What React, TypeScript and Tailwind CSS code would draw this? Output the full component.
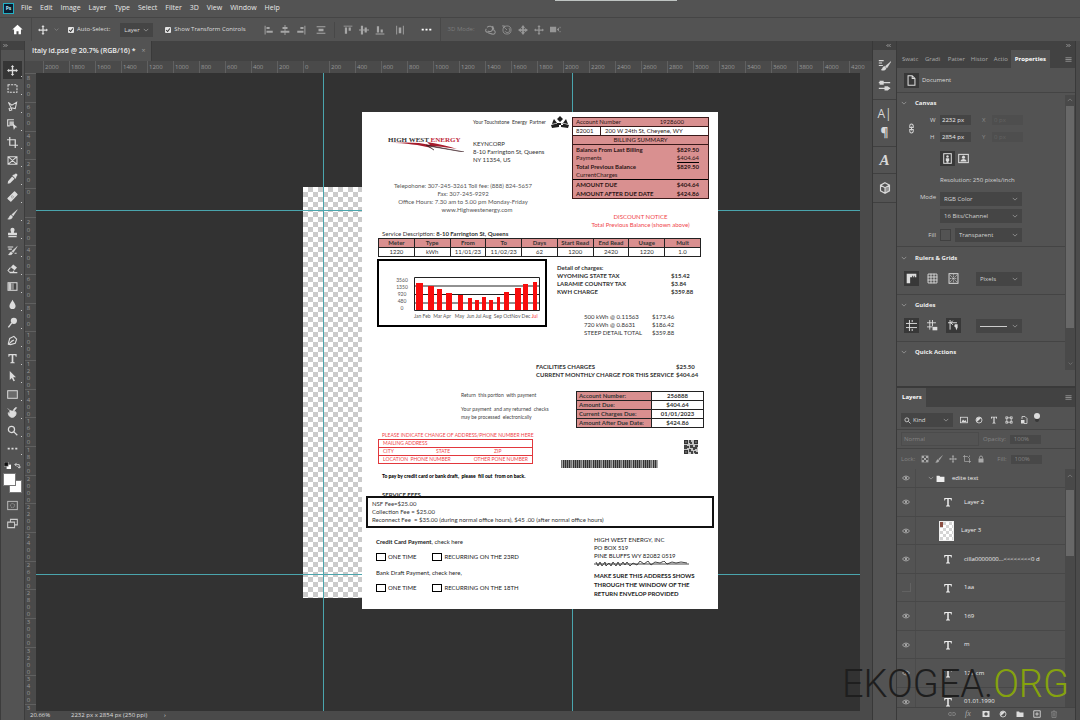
import type { ReactNode } from 'react';

const MENUS = ['File', 'Edit', 'Image', 'Layer', 'Type', 'Select', 'Filter', '3D', 'View', 'Window', 'Help'];

const ICONS: Record<string, ReactNode> = {
  home: <path d="M8 1 0.5 8H3v7h3.5v-4.500h3V15H13V8h2.500z" fill="currentColor" />,
  move: <path d="M8 0l2.500 3H9v4h4V5.500L16 8l-3 2.500V9H9v4h1.500L8 16l-2.500-3H7V9H3v1.500L0 8l3-2.500V7h4V3H5.500z" fill="currentColor" />,
  marquee: <rect x="1.500" y="2.500" width="13" height="11" fill="none" stroke="currentColor" strokeWidth="1.500" strokeDasharray="3 1.500" />,
  lasso: <path d="M2 2l5 4 7-4-2 9-6-1-4-8zM6 10l-3 1 1 3 3-1-1-3" fill="none" stroke="currentColor" strokeWidth="1.500" />,
  objectSelect: <><path d="M10 1H1v9h3" fill="none" stroke="currentColor" strokeWidth="1.600" /><path d="M3.500 3.500h6.500v6.500H3.500z" fill="currentColor" opacity=".8" /><path d="M8 6l7 6-3 .5L10 16z" fill="currentColor" /></>,
  crop: <path d="M4 0v12h12M0 4h12v12" fill="none" stroke="currentColor" strokeWidth="1.800" />,
  frame: <path d="M1.500 2.500h13v11h-13zM1.500 2.500l13 11M14.500 2.500l-13 11" fill="none" stroke="currentColor" strokeWidth="1.500" />,
  eyedropper: <path d="M10 3l1.500-1.500a2 2 0 0 1 3 3L13 6l.7.8-1.400 1.400-4.500-4.500L9.200 2.300zM7.500 5l3.500 3.500L4.500 15 1 15.500 1.500 12z" fill="currentColor" />,
  heal: <><path d="M11 1.500l3.500 3.500L5.500 14.500 1.500 11z" fill="currentColor" stroke="currentColor" strokeWidth="2" strokeLinejoin="round" /><path d="M7 7h1M9 8.500h1M7 10h1M6 8.500h1" stroke="#444" /></>,
  brush: <path d="M15 1l-8 7 2 2zM6 9c-3 0-2 4-5 5.500 3 1 7 .5 7-3.500z" fill="currentColor" stroke="currentColor" strokeWidth=".6" />,
  stamp: <path d="M8 1a3 3 0 0 1 3 3c0 2-1 2.500-1 4.500h4.500V12h-13V8.500H6C6 6.500 5 6 5 4a3 3 0 0 1 3-3zM2 13h12v2H2z" fill="currentColor" />,
  history: <><path d="M15 2l-8 7 2 2zM6 10c-2 0-2 3-4 4 3 1 6 0 6-2.500z" fill="currentColor" stroke="currentColor" strokeWidth=".6" /><path d="M1 3h8M2 6h5M11 12h3" stroke="currentColor" strokeWidth="1.500" /></>,
  eraser: <><path d="M9 2l5.500 4.500-3.500 4-5.500-4.500z" fill="currentColor" /><path d="M5 6.500L1.500 11 4 13.500h4.500L10.500 11M4 14h11" fill="none" stroke="currentColor" strokeWidth="1.500" /></>,
  gradient: <><rect x="1.500" y="2.500" width="13" height="11" fill="#444" stroke="currentColor" strokeWidth="1.500" /><path d="M2 3h4v10H2z" fill="#ccc" /><path d="M6 3h4v10H6z" fill="#888" /></>,
  drop: <path d="M8 1c1 3 4.500 6 4.500 9a4.500 4.500 0 0 1-9 0C3.500 7 7 4 8 1z" fill="currentColor" />,
  dodge: <><circle cx="10" cy="5.500" r="4.500" fill="currentColor" /><path d="M7 8.500L2 15" stroke="currentColor" strokeWidth="2" /></>,
  pen: <path d="M10 2l4 4-2 6-7 2-3-.5 0-1.500L4 5zM3 13l5-5M10 7l-2 2" fill="none" stroke="currentColor" strokeWidth="1.600" />,
  type: <path d="M2 1.500h12v4h-1.200L12 3.200H9.200v10l2 .6V15H4.800v-1.200l2-.6v-10H4L3.200 5.500H2z" fill="currentColor" />,
  arrow: <path d="M4 0l9 9H9l2.500 5-2 1-2.500-5-3 3z" fill="currentColor" />,
  rect: <rect x="1" y="2.500" width="14" height="11" fill="#6b6b6b" stroke="currentColor" strokeWidth="1.400" />,
  hand: <path d="M4 5c2 0 4 2 5 0s3-5 5-4l-4 5c3 0 4 2 3 5s-4 5-7 4-5-5-4-7l2 2zM1 2l3 3" fill="currentColor" stroke="currentColor" />,
  zoom: <path d="M11 6.500a4.500 4.500 0 1 1-9 0 4.500 4.500 0 0 1 9 0zM10 10l5 5" fill="none" stroke="currentColor" strokeWidth="1.800" />,
  dots: <path d="M1 7h3v2.500H1zM6.500 7h3v2.500h-3zM12 7h3v2.500h-3z" fill="currentColor" />,
  mask: <><rect x="1" y="2" width="14" height="12" fill="none" stroke="currentColor" strokeWidth="1.400" /><circle cx="8" cy="8" r="3" fill="none" stroke="currentColor" strokeDasharray="1.500 1" /></>,
  screens: <path d="M5 6V2h10v8h-4M1 6h10v8H1z" fill="none" stroke="currentColor" strokeWidth="1.500" />,
  alignLeft: <path d="M1 1h1.500v14H1zM4 3h5v3.500H4zM4 9h10v3.500H4z" fill="currentColor" />,
  alignCenter: <path d="M7.300 0h1.400v16H7.300zM4 3h8v3.500H4zM1 9h14v3.500H1z" fill="currentColor" />,
  alignRight: <path d="M13.500 1H15v14h-1.500zM7 3h5v3.500H7zM2 9h10v3.500H2z" fill="currentColor" />,
  distribute: <path d="M1 2h14v1.400H1zM4 6h8v4H4zM1 12.500h14V14H1z" fill="currentColor" />,
  alignTop: <path d="M1 1h14v1.500H1zM3 4h3.500v10H3zM9 4h3.500v5H9z" fill="currentColor" />,
  alignMiddle: <path d="M0 7.300h16v1.400H0zM3 1h3.500v14H3zM9 4h3.500v8H9z" fill="currentColor" />,
  alignBottom: <path d="M1 13.500h14V15H1zM3 2h3.500v10H3zM9 7h3.500v5H9z" fill="currentColor" />,
  spacing: <path d="M2 1h1.400v14H2zM6 4h4v9H6zM12.600 1H14v14h-1.400z" fill="currentColor" />,
  orbit: <path d="M3 5c3-3 8-2 8 2s-4 5-7 3M2 7c-3 4 1 6 5 4M10 8c4 0 6 4 4 6s-6 0-9-1M11 3l2 5" fill="none" stroke="currentColor" strokeWidth="1.500" />,
  roll: <><circle cx="8" cy="8" r="6.500" fill="none" stroke="currentColor" strokeWidth="1.300" /><path d="M1 1l4 1-2 3zM8 8l-3-3M11 5a4 4 0 1 1-6 5" fill="none" stroke="currentColor" strokeWidth="1.300" /></>,
  slide: <path d="M8 0l3 4-2 2 1 1 2-2 4 3-4 3-2-2-1 1 2 2-3 4-3-4 2-2-1-1-2 2-4-3 4-3 2 2 1-1-2-2z" fill="currentColor" />,
  camera: <path d="M0 4h9v8H0zM10 8l3-3v6zM14 4h1.200v2H14zM14 10h1.200v2H14z" fill="currentColor" />,
  brushes: <><path d="M1 2h6M1 5h4M1 8h5" stroke="currentColor" strokeWidth="1.300" /><path d="M16 3l-7 6 2 2zM8 9c-2 0-2 3-4 4.500 3 1 6 0 6-2.500z" fill="currentColor" stroke="currentColor" strokeWidth=".6" /></>,
  sliders: <><path d="M1 4.500h14M1 11.500h14" stroke="currentColor" strokeWidth="1.500" /><path d="M2 2h5v5H2zM8 9h4l3 2.500-3 2.500H8z" fill="currentColor" /></>,
  cube: <><path d="M8 8v7l6-3.200V4.500z" fill="currentColor" opacity=".5" /><path d="M8 1l6 3.200v7.600L8 15l-6-3.200V4.200zM2 4.200L8 7.500l6-3.300M8 7.500V15" fill="none" stroke="currentColor" strokeWidth="1.500" /></>,
  document: <path d="M3 1h6l4 4v10H3zM9 1v4h4" fill="none" stroke="currentColor" strokeWidth="1.500" />,
  chain: <path d="M5.500 6.500V4a2.500 2.500 0 0 1 5 0v2.500zM5.500 9.500V12a2.500 2.500 0 0 0 5 0V9.500zM8 5v6" fill="none" stroke="currentColor" strokeWidth="1.500" />,
  portrait: <><rect x="2.500" y="1" width="11" height="14" fill="none" stroke="currentColor" strokeWidth="1.500" /><circle cx="8" cy="5" r="1.800" fill="currentColor" /><path d="M5.500 7.500h5v4h-1V14h-3v-2.500h-1z" fill="currentColor" /></>,
  landscape: <><rect x="1" y="2" width="14" height="12" fill="none" stroke="currentColor" strokeWidth="1.500" /><circle cx="8" cy="6" r="2.200" fill="currentColor" /><path d="M3.500 12.500c0-5 9-5 9 0z" fill="currentColor" /></>,
  ruler: <path d="M1 1h14v5h-2V4h-1v2h-1.500V4H9v2H6v9H1z" fill="currentColor" />,
  grid: <path d="M1.500 1.500h13v13h-13zM5.800 1v14M10.200 1v14M1 5.800h14M1 10.200h14" fill="none" stroke="currentColor" strokeWidth="1.300" />,
  pixelGrid: <><rect x="1.500" y="1" width="13" height="14" fill="none" stroke="currentColor" strokeWidth="1.400" /><path d="M3 3l10 10M13 3L3 13M8 2v12M3 8h10" stroke="currentColor" strokeDasharray="1.500 1" /></>,
  guides: <path d="M5 0v16M0 5h16M0 11h16M9 0v3M9 13v3" stroke="currentColor" strokeWidth="1.400" />,
  guidesLock: <><path d="M4 0v14M8 0v9M0 4h13M0 10h8" stroke="currentColor" strokeWidth="1.300" /><path d="M8 10h7v5H8z" fill="currentColor" /></>,
  smartGuides: <><path d="M3 0v14M0 4h13M7 1L4 4l3 3" fill="none" stroke="currentColor" strokeWidth="1.400" /><path d="M10 6h4v5l-2 4-1-4-2-2z" fill="currentColor" /></>,
  image: <><rect x="1" y="2.500" width="14" height="11" fill="none" stroke="currentColor" strokeWidth="1.600" /><path d="M3 12l3-5 3 3 2-2 2 4z" fill="currentColor" /></>,
  adjust: <><circle cx="8" cy="8" r="6" fill="none" stroke="currentColor" strokeWidth="1.600" /><path d="M12.200 3.800a6 6 0 0 0-8.400 8.400z" fill="currentColor" /></>,
  shape: <path d="M3.500 3.500h9v9h-9zM1.500 1.500h4v4h-4zM10.500 1.500h4v4h-4zM1.500 10.500h4v4h-4zM10.500 10.500h4v4h-4z" fill="none" stroke="currentColor" strokeWidth="1.400" />,
  smart: <><path d="M4 6V1h6l4 4v10H8" fill="none" stroke="currentColor" strokeWidth="1.600" /><path d="M2 8h7v7H2z" fill="currentColor" /></>,
  lock: <><path d="M3 7h10v8H3z" fill="currentColor" /><path d="M5 7V5a3 3 0 0 1 6 0v2" fill="none" stroke="currentColor" strokeWidth="1.800" /></>,
  checker: <><path d="M1.500 1.500h13v13h-13z" fill="none" stroke="currentColor" /><path d="M2 2h4v4H2zM10 2h4v4h-4zM6 6h4v4H6zM2 10h4v4H2zM10 10h4v4h-4z" fill="currentColor" /></>,
  artboard: <path d="M3 0v13h13M0 3h9l4 4v9M13 1v3" fill="none" stroke="currentColor" strokeWidth="1.400" />,
  folder: <path d="M1 3h5l1.500 2H15v9H1z" fill="currentColor" />,
  eye: <><path d="M1 8c3-5 11-5 14 0-3 5-11 5-14 0z" fill="none" stroke="currentColor" strokeWidth="1.800" /><circle cx="8" cy="8" r="2.300" fill="currentColor" /></>,
  link: <path d="M7 5H4a3 3 0 0 0 0 6h3M9 5h3a3 3 0 0 1 0 6H9M5 8h6" fill="none" stroke="currentColor" strokeWidth="1.600" />,
  layerMask: <><path d="M1 2h14v12H1z" fill="currentColor" /><circle cx="8" cy="8" r="3.500" fill="#535353" /></>,
  add: <path d="M1.500 1.500h13v13h-13zM8 4.500v7M4.500 8h7" fill="none" stroke="currentColor" strokeWidth="1.700" />,
  trash: <path d="M2 4h12M6 4V2h4v2M3.500 4l.5 11h8l.5-11M6.500 6v7M9.500 6v7" fill="none" stroke="currentColor" strokeWidth="1.500" />,
  burger: <path d="M1 4h14M1 8h14M1 12h14" stroke="currentColor" strokeWidth="1.600" />,
  chevron: <path d="M2 5l6 6 6-6" fill="none" stroke="currentColor" strokeWidth="1.800" />,
  chevronUp: <path d="M2 11l6-6 6 6" fill="none" stroke="currentColor" strokeWidth="1.800" />,
  expand: <path d="M2 4l4 4-4 4M9 4l4 4-4 4" fill="none" stroke="currentColor" strokeWidth="2.400" />,
  collapse: <path d="M7 4L3 8l4 4M14 4l-4 4 4 4" fill="none" stroke="currentColor" strokeWidth="2.400" />,
};

function Icon({ name, className = 'size-3' }: { name: string; className?: string }) {
  return (
    <svg viewBox="0 0 16 16" className={`shrink-0 ${className}`} aria-hidden="true">
      {ICONS[name]}
    </svg>
  );
}

function Dropdown({ label, value, className = '' }: { label: string; value: string; className?: string }) {
  return (
    <div className={`relative h-[14px] bg-[#454545] ${className}`}>
      <select aria-label={label} className="h-full w-full appearance-none bg-transparent pr-3 pl-1 text-[6px] leading-[14px] outline-none">
        <option>{value}</option>
      </select>
      <Icon name="chevron" className="pointer-events-none absolute top-1 right-1 size-[6px] text-[#aaa]" />
    </div>
  );
}

function Check({ label }: { label: string }) {
  return (
    <label className="flex items-center gap-[3px] font-medium whitespace-nowrap">
      <span className="relative flex size-[6px]">
        <input type="checkbox" defaultChecked className="size-[6px] appearance-none rounded-[1px] bg-[#e4e4e4]" />
        <svg viewBox="0 0 8 8" className="pointer-events-none absolute inset-0 size-[6px]"><path d="M1.500 4l2 2 3-4" fill="none" stroke="#333" strokeWidth="1.400" /></svg>
      </span>
      {label}
    </label>
  );
}

function MenuBar() {
  return (
    <header className="relative flex h-[17px] shrink-0 items-center gap-[7px] pl-[3px] text-[7px] text-[#e8e8e8]">
      <span className="grid size-[11px] place-items-center border border-[#23b0c4] bg-[#0a1f33] text-[5px] font-bold text-[#b5e8f5]">Ps</span>
      <nav className="flex gap-2">
        {MENUS.map((m) => (
          <button key={m}>{m}</button>
        ))}
      </nav>
      <div className="absolute top-0 left-[555px] h-px w-[122px] bg-[#bfc4c2]" />
    </header>
  );
}

function OptionsBar() {
  return (
    <div className="flex h-6 shrink-0 items-center border-t border-[#454545] text-[6px] text-[#dedede]">
      <button aria-label="Home" className="ml-3 text-white"><Icon name="home" className="size-[11px]" /></button>
      <div className="ml-2 h-6 w-px bg-[#484848]" />
      <Icon name="move" className="ml-[6px] size-[10px]" />
      <Icon name="chevron" className="ml-[6px] size-[5px] text-[#999]" />
      <div className="ml-[9px]"><Check label="Auto-Select:" /></div>
      <Dropdown label="Auto-select target" value="Layer" className="ml-[10px] w-[33px]" />
      <div className="ml-3"><Check label="Show Transform Controls" /></div>
      <div className="ml-[18px] flex items-center gap-[6px] text-[#a6a6a6]">
        <Icon name="alignLeft" className="size-[10px]" />
        <Icon name="alignCenter" className="size-[10px]" />
        <Icon name="alignRight" className="size-[10px]" />
        <Icon name="distribute" className="ml-1 size-[10px]" />
        <div className="mx-[2px] h-4 w-px bg-[#484848]" />
        <Icon name="alignTop" className="size-[10px]" />
        <Icon name="alignMiddle" className="size-[10px]" />
        <Icon name="alignBottom" className="size-[10px]" />
        <Icon name="spacing" className="ml-1 size-[10px]" />
      </div>
      <Icon name="dots" className="ml-4 size-[11px] text-white" />
      <div className="ml-2 h-6 w-px bg-[#484848]" />
      <span className="ml-[7px] text-[#7c7c7c]">3D Mode:</span>
      <div className="ml-[10px] flex items-center gap-[6px] text-[#969696]">
        <Icon name="orbit" className="size-[11px]" />
        <Icon name="roll" className="size-[10px]" />
        <Icon name="slide" className="size-[10px]" />
        <Icon name="move" className="size-[10px]" />
        <Icon name="camera" className="size-[11px]" />
      </div>
    </div>
  );
}

const TOOLS = ['move', 'marquee', 'lasso', 'objectSelect', 'crop', 'frame', 'eyedropper', 'heal', 'brush', 'stamp', 'history', 'eraser', 'gradient', 'drop', 'dodge', 'pen', 'type', 'arrow', 'rect', 'hand', 'zoom', 'dots'];

function Toolbar() {
  return (
    <aside className="flex w-[25px] shrink-0 flex-col border-x border-[#3c3c3c]">
      <div className="flex h-[9px] items-center bg-[#424242] pl-[2px] text-[#ccc]"><Icon name="expand" className="size-[5px]" /></div>
      <div className="mt-[11px] flex flex-col items-center">
        {TOOLS.map((t, i) => (
          <button key={t} aria-label={t} className={`relative grid h-[18px] w-[19px] place-items-center text-[#dcdcdc] ${i === 0 ? 'bg-[#353535]' : ''}`}>
            <Icon name={t} className="size-[11px]" />
            <span className="absolute right-0 bottom-[2px] size-px bg-[#ccc]" />
          </button>
        ))}
        <div className="flex w-full justify-between px-[3px] pt-[5px] text-[#ddd]">
          <svg viewBox="0 0 8 8" className="size-[7px]"><path d="M3 3h5v5H3z" fill="#fff" /><path d="M0 0h5v5H0z" fill="#111" stroke="#ccc" strokeWidth=".6" /></svg>
          <svg viewBox="0 0 8 8" className="size-[7px]"><path d="M1 3h5v4M3 1L1 3l2 2M4 5l2 2 2-2" fill="none" stroke="currentColor" /></svg>
        </div>
        <div className="mt-1 flex">
          <button aria-label="Foreground color" className="relative z-10 size-[13px] border border-[#777] bg-white" />
          <button aria-label="Background color" className="mt-[7px] -ml-[7px] size-[13px] border border-[#777] bg-white" />
        </div>
        <button aria-label="Quick mask" className="mt-[7px] text-[#bbb]"><Icon name="mask" className="size-[11px]" /></button>
        <button aria-label="Screen mode" className="mt-[7px] text-[#ccc]"><Icon name="screens" className="size-[11px]" /></button>
      </div>
    </aside>
  );
}

const H_MARKS = Array.from({ length: 32 }, (_, i) => Math.abs(i * 200 - 2000));
// the last mark only has room for its first digit
const V_MARKS = [...Array.from({ length: 22 }, (_, i) => String(Math.abs(i * 200 - 800))), '3'];

function HighWestLogo() {
  return (
    <div className="w-[78px] font-['Liberation_Serif',serif] text-[7px] leading-[8px] font-bold whitespace-nowrap text-[#333]">
      HIGH WEST <span className="text-[#c0283a]">ENERGY</span>
      <svg viewBox="0 0 78 10" className="-mt-[2px] block h-[10px] w-full">
        <path d="M2 1c14-1 30-1 40 2l-3-3c12 2 22 4 30 7-12-2-20-3-29-3l4 2C31 3 18 1 2 1z" fill="#a51c2c" />
        <path d="M38 3l38 7-36-6 6 4z" fill="#3a1d22" stroke="#3a1d22" strokeWidth=".5" />
      </svg>
    </div>
  );
}

const BARS = [
  [2, 7, 27], [14, 6, 24], [23, 5, 21], [32, 6, 17], [44, 5, 15], [54, 4, 12], [61, 4, 10], [68, 4, 13],
  [75, 4, 10], [83, 3, 13], [90, 5, 18], [101, 6, 22], [109, 5, 26], [119, 4, 28],
];

function UsageChart() {
  return (
    <figure className="mt-[2px] ml-[15px] flex w-[170px] gap-[6px] self-start border-2 border-black pt-4 pb-[5px] pl-[17px] text-[5px] leading-[7px] text-[#555]">
      <div className="w-3 text-center">
        {['3560', '1350', '920', '480', '0'].map((v) => (
          <div key={v}>{v}</div>
        ))}
      </div>
      <div className="whitespace-nowrap">
        <svg viewBox="0 0 126 34" className="h-[34px] w-[126px]">
          <path d="M.5.500h125v33H.5zM0 9h126M0 17.500h126M0 26h126" fill="none" stroke="#222" />
          {BARS.map(([x, w, h]) => (
            <rect key={x} x={x} y={33 - h} width={w} height={h} fill="#f80c0c" />
          ))}
        </svg>
        <figcaption className="mt-[2px]">Jan Feb&nbsp; Mar Apr &nbsp; May&nbsp; Jun Jul Aug&nbsp; Sep OctNov Dec <span className="text-red-500">Jul</span></figcaption>
      </div>
    </figure>
  );
}

const METER = [['Meter', '1220'], ['Type', 'kWh'], ['From', '11/01/23'], ['To', '11/02/23'], ['Days', '62'], ['Start Read', '1200'], ['End Read', '2420'], ['Usage', '1220'], ['Mult', '1.0']];
const DUE = [['Account Number:', '256888'], ['Amount Due:', '$404.64'], ['Current Charges  Due:', '01/01/2023'], ['Amount After Due Date:', '$424.86']];

function Line({ left, right, className = '' }: { left: string; right: string; className?: string }) {
  return (
    <div className={`flex justify-between ${className}`}>
      <span>{left}</span>
      <span>{right}</span>
    </div>
  );
}

function Summary() {
  return (
    <div className="mt-[5px] w-[137px] border border-[#3a1a1a] bg-[#d99090] leading-[9px] text-[#2c1515]">
      <Line left="Account Number" right="1928600" className="pr-6 pl-[3px] leading-[8px]" />
      <div className="flex border-y border-[#3a1a1a] bg-white leading-[8px]">
        <span className="w-7 border-r border-[#3a1a1a] pl-[3px]">82001</span>
        <span className="pl-1">200 W 24th St, Cheyene, WY</span>
      </div>
      <div className="border-b border-[#3a1a1a] text-center leading-[8px]">BILLING SUMMARY</div>
      <div className="pt-px pr-[9px] pl-[3px] leading-[8px]">
        <Line left="Balance From Last Billing" right="$829.50" className="font-bold" />
        <div className="flex justify-between">Payments<span className="border-b border-black">$404.64</span></div>
        <Line left="Total Previous Balance" right="$829.50" className="font-bold" />
        <div>CurrentCharges</div>
      </div>
      <div className="border-t border-black pr-[9px] pl-[3px] font-bold">
        <Line left="AMOUNT DUE" right="$404.64" />
        <Line left="AMOUNT AFTER DUE DATE" right="$424.86" />
      </div>
    </div>
  );
}

function PayBox({ label }: { label: string }) {
  return (
    <label className="flex items-center gap-[2px]">
      <input type="checkbox" className="h-[8px] w-[10px] appearance-none border border-black bg-white" />
      {label}
    </label>
  );
}

function Qr() {
  return (
    <svg viewBox="0 0 14 14" className="size-[14px]">
      <path d="M0 0h14v14H0z" fill="#c4c4c4" />
      <path d="M0 0h4v4H0zM10 0h4v4h-4zM0 10h4v4H0z" fill="#333" />
      <path d="M1.500 1.500h1v1h-1zM11.500 1.500h1v1h-1zM1.500 11.500h1v1h-1z" fill="#eee" />
      <path d="M5 0h2v2h1v2H6V3H5zM0 5h3v1h2v2H3v1H0zM6 5h3v2h2V5h3v2h-1v2h-2v1H9V8H6zM5 9h2v2h2v3H7v-2H5zM10 11h2v1h2v2h-3v-1h-1z" fill="#444" />
    </svg>
  );
}

const BARCODE = Array.from({ length: 48 }, (_, i) => ((i * 7) % 5 === 0 ? 0.5 : 1.3));

function Bill() {
  return (
    <article className="absolute top-[39px] left-[326px] w-[356px] bg-white pb-[11px] font-[Lato,sans-serif] text-[6px] leading-[8px] whitespace-nowrap text-[#333]">
      <div className="flex">
        <div className="w-[210px]">
          <div className="flex h-[20px] items-center gap-[5px] pl-[111px] text-[5px]">
            Your Touchstone&nbsp; Energy&nbsp; Partner
            <svg viewBox="0 0 18 12" className="h-3 w-[18px] shrink-0">
              <path d="M9 0l3 3-3 3-3-3zM3 3l3 4-5 1 1-3zM15 3l2 5-5-1zM0 9l8-2v4L1 12zM18 9l-8-2v4l7 1zM6 7h6v2H6z" fill="#1f1f1f" />
            </svg>
          </div>
          <div className="flex gap-[7px] pt-[4px] pl-[26px]">
            <HighWestLogo />
            <div className="pt-1">KEYNCORP<br />8-10 Farrington St, Queens<br />NY 11354, US</div>
          </div>
          <div className="mt-[18px] w-[202px] text-center text-[#555]">
            Telepohone: 307-245-3261 Toll fee: (888) 824-5657<br />
            Fax: 307-245-9292<br />
            Office Hours: 7.30 am to 5.00 pm Monday-Friday<br />
            <span className="pl-7">www.Highwestenergy.com</span>
          </div>
        </div>
        <div>
          <Summary />
          <div className="mt-[14px] w-[137px] text-center text-[#f0454a]">
            DISCOUNT NOTICE<br />Total Previous Balance (shown above)
          </div>
        </div>
      </div>

      <div className="pt-px pl-5">Service Description: <b>8-10 Farrington St, Queens</b></div>
      <table className="ml-4 w-[323px] table-fixed border-collapse text-center leading-[8px] [&_td]:border [&_td]:border-[#222] [&_th]:border [&_th]:border-[#222]">
        <thead className="bg-[#d98f8f]"><tr>{METER.map(([h]) => <th key={h} className="p-0">{h}</th>)}</tr></thead>
        <tbody><tr>{METER.map(([h, v]) => <td key={h} className="p-0">{v}</td>)}</tr></tbody>
      </table>

      <div className="flex">
        <UsageChart />
        <div className="pt-[7px] pl-[10px]">
          <div className="w-[141px] font-bold">
            Detail of charges:
            <div className="grid grid-cols-[114px_1fr]">
              <span>WYOMING STATE TAX</span><span>$15.42</span>
              <span>LARAMIE COUNTRY TAX</span><span>$3.84</span>
              <span>KWH CHARGE</span><span>$359.88</span>
            </div>
          </div>
          <div className="mt-[17px] ml-[27px] grid grid-cols-[68px_1fr]">
            <span>500 kWh @ 0.11563</span><span>$173.46</span>
            <span>720 kWh @ 0.8631</span><span>$186.42</span>
            <span>STEEP DETAIL TOTAL</span><span>$359.88</span>
          </div>
        </div>
      </div>
      <div className="mt-[26px] ml-[174px] grid grid-cols-[140px_1fr] font-bold">
        <span>FACILITIES CHARGES</span><span>$25.50</span>
        <span>CURRENT MONTHLY CHARGE FOR THIS SERVICE</span><span>$404.64</span>
      </div>

      <div className="mt-[12px] flex">
        <div className="w-[214px]">
          <div className="pl-[99px] text-[5px] text-[#444]">
            Return&nbsp; this portion&nbsp; with payment
            <div className="mt-[6px]">Your payment&nbsp; and any returned&nbsp; checks<br />may be processed&nbsp; electronically</div>
          </div>
          <div className="mt-[10px] pl-5 text-[5px] text-[#f0454a]">PLEASE INDICATE CHANGE OF ADDRESS/PHONE NUMBER HERE</div>
          <div className="ml-4 w-[155px] divide-y divide-[#e2373c] border border-[#e2373c] text-[5px] leading-[7px] text-[#f0454a] *:flex *:px-1">
            <div>MAILING ADDRESS</div>
            <div><span className="w-[53px]">CITY</span><span className="w-[58px]">STATE</span><span>ZIP</span></div>
            <div className="justify-between"><span>LOCATION&nbsp; PHONE NUMBER</span><span>OTHER PONE NUMBER</span></div>
          </div>
          <div className="mt-2 pl-5 text-[5px] font-black text-black">To pay by credit card or bank draft,&nbsp; please&nbsp; fill out&nbsp; from on back.</div>
        </div>
        <div>
          <table className="w-[128px] border-collapse leading-[8px] font-bold [&_td]:border [&_td]:border-[#222] [&_th]:border [&_th]:border-[#222]">
            <tbody>
              {DUE.map(([k, v]) => (
                <tr key={k}>
                  <th className="w-[75px] bg-[#d98f8f] p-0 pl-[2px] text-left">{k}</th>
                  <td className="p-0 text-center">{v}</td>
                </tr>
              ))}
            </tbody>
          </table>
          <div className="mt-3 flex justify-end pr-[6px]"><Qr /></div>
          <svg viewBox="0 0 97 8" className="mt-[6px] -ml-[15px] h-2 w-[97px]">
            <path d="M0 0h97v8H0z" fill="#aaa" />
            {BARCODE.map((w, i) => <rect key={i} x={i * 2} y="0" width={w} height="8" fill="#333" />)}
          </svg>
        </div>
      </div>

      <h3 className="mt-[11px] pl-5 font-bold">SERVICE FEES</h3>
      <div className="relative mx-1 -mt-[3px] border-2 border-[#111] bg-white py-[2px] pl-1">
        NSF Fee=$25.00<br />Collection Fee = $25.00<br />Reconnect Fee&nbsp; = $35.00 (during normal office hours), $45 .00 (after normal office hours)
      </div>

      <div className="mt-[8px] flex text-[#222]">
        <div className="w-[218px] pl-[14px]">
          <div className="mt-[2px]"><b>Credit Card Payment</b>, check here</div>
          <div className="mt-[7px] flex gap-4"><PayBox label="ONE TIME" /><PayBox label="RECURRING ON THE 23RD" /></div>
          <div className="mt-[8px]">Bank Draft Payment, check here,</div>
          <div className="mt-[7px] flex gap-4"><PayBox label="ONE TIME" /><PayBox label="RECURRING ON THE 18TH" /></div>
        </div>
        <address className="pl-[14px] not-italic">
          HIGH WEST ENERGY, INC<br />PO BOX 519<br />PINE BLUFFS WY 82082 0519
          <svg viewBox="0 0 95 6" className="mt-px h-[6px] w-[95px]">
            <path d="M0 3h95M2 1l2 4 2-4 2 4 3-4 1 4 3-3 2 3 2-4 3 4 2-4 2 4 3-4 2 3 2-3 3 4 3-3 4 2 3-4 4 3 4-3 3 4 4-3 5 1 4-2 3 3 5-2 4 1 5-1 6 1" fill="none" stroke="#333" strokeWidth=".9" />
          </svg>
          <div className="mt-[4px] leading-[9px] font-bold">MAKE SURE THIS ADDRESS SHOWS<br />THROUGH THE WINDOW OF THE<br />RETURN ENVELOP PROVIDED</div>
        </address>
      </div>
    </article>
  );
}

function Workspace() {
  return (
    <main className="flex min-w-0 flex-1 flex-col bg-[#424242]">
      <div className="flex h-5 shrink-0">
        <div className="flex items-center gap-[6px] border-r border-[#3a3a3a] bg-[#535353] pr-[5px] pl-[7px] text-[7px] font-semibold text-[#eee]">
          Italy id.psd @ 20.7% (RGB/16) *
          <button aria-label="Close document" className="text-[7px] font-normal text-[#999]">×</button>
        </div>
      </div>
      <div className="flex h-3 shrink-0 overflow-hidden bg-[#4a4a4a] pl-[18px] text-[6px] leading-[13px] text-[#999]">
        {H_MARKS.map((m, i) => (
          <div key={i} className="w-[26px] shrink-0 border-l border-[#606060] pl-px">{m}</div>
        ))}
      </div>
      <div className="flex min-h-0 flex-1">
        <div className="w-[11px] shrink-0 overflow-hidden bg-[#4a4a4a] text-center text-[6px] leading-[7px] text-[#999]">
          {V_MARKS.map((m, i) => (
            <div key={i} className={`h-[29px] border-t border-[#606060] pr-1 last:h-[7px] nth-[3n]:h-7 ${m.length === 3 ? 'leading-[8px]' : ''}`}>
              {m.split('').map((d, j) => <div key={j}>{d}</div>)}
            </div>
          ))}
        </div>
        <div className="relative flex-1 overflow-hidden bg-[#323232]">
          <div className="absolute top-[114px] left-[267px] h-[411px] w-[270px] bg-[repeating-conic-gradient(#cbcbcb_0_25%,#fff_0_50%)] bg-size-[10px_10px]" />
          <div className="absolute inset-y-0 left-[287px] w-px bg-[#4aa5ad]" />
          <div className="absolute inset-y-0 left-[536px] w-px bg-[#4aa5ad]" />
          <div className="absolute inset-x-0 top-[137px] h-px bg-[#4aa5ad]" />
          <div className="absolute inset-x-0 top-[501px] h-px bg-[#4aa5ad]" />
          <Bill />
        </div>
        <div className="w-3 shrink-0 bg-[#4a4a4a]" />
      </div>
      <footer className="flex h-[9px] shrink-0 items-start bg-[#4a4a4a] pl-[5px] text-[6px] leading-[9px] text-[#ddd]">
        <span className="w-[41px]">20.66%</span>
        <span className="w-[93px]">2232 px x 2854 px (250 ppi)</span>
        <span>›</span>
      </footer>
    </main>
  );
}

function IconDock() {
  return (
    <aside className="flex w-6 shrink-0 flex-col border-l border-[#383838] text-[#d8d8d8]">
      <div className="flex h-[9px] items-center justify-end bg-[#424242] pr-[5px] text-[#ccc]"><Icon name="collapse" className="size-[5px]" /></div>
      <div className="flex flex-col items-center gap-[7px] border-b border-[#404040] pt-[9px] pb-[7px]">
        <Icon name="brushes" className="size-[13px]" />
        <Icon name="sliders" className="size-[13px]" />
      </div>
      <div className="flex flex-col items-center gap-[3px] border-b border-[#404040] pt-[6px] pb-[5px] text-[12px] leading-4">
        <span>A|</span>
        <span className="font-bold">¶</span>
      </div>
      <div className="border-b border-[#404040] py-[5px] text-center font-['Liberation_Serif',serif] text-[15px] leading-4 font-bold italic">A</div>
      <div className="grid place-items-center border-b border-[#404040] py-2"><Icon name="cube" className="size-3" /></div>
    </aside>
  );
}

function SectionTitle({ children }: { children: ReactNode }) {
  return (
    <h2 className="flex items-center gap-2 pl-[4px] text-[6px] leading-[10px] font-bold text-[#eee]">
      <Icon name="chevron" className="size-[6px] text-[#aaa]" />
      {children}
    </h2>
  );
}

function SizeField({ id, value, disabled }: { id: string; value: string; disabled?: boolean }) {
  return (
    <label className={`flex items-center gap-[4px] ${disabled ? 'text-[#8a8a8a]' : ''}`}>
      <span className="w-[6px]">{id}</span>
      <input defaultValue={value} disabled={disabled} className={`h-[10px] w-[31px] pl-[2px] ${disabled ? 'bg-[#4e4e4e] text-[#636363]' : 'bg-[#454545] text-[#eee]'}`} />
    </label>
  );
}

function Toggle({ name, on }: { name: string; on?: boolean }) {
  return (
    <button aria-label={name} className={`grid size-[15px] place-items-center text-[#ddd] ${on ? 'bg-[#383838]' : ''}`}>
      <Icon name={name} className="size-[11px]" />
    </button>
  );
}

function Properties() {
  return (
    <section className="flex h-[336px] shrink-0 flex-col">
      <div className="flex h-[18px] items-center bg-[#424242] text-[6px] text-[#aaa]">
        <div className="flex flex-1 gap-[6px] overflow-hidden pl-[5px]">
          {['Swatc', 'Gradi', 'Patter', 'Histor', 'Actio'].map((t) => <button key={t} className="w-[17px] text-left">{t}</button>)}
        </div>
        <button className="h-full bg-[#535353] px-1 font-bold text-white">Properties</button>
        <button aria-label="Panel menu" className="mr-[3px] ml-[15px]"><Icon name="burger" className="size-[7px]" /></button>
      </div>
      <div className="flex h-[25px] items-center gap-[3px] border-b border-[#444] pl-[7px] text-[6px]">
        <Toggle name="document" on />
        Document
      </div>
      <div className="flex min-h-0 flex-1">
        <div className="min-w-0 flex-1 text-[6px] text-[#d4d4d4]">
          <div className="pt-[5px]"><SectionTitle>Canvas</SectionTitle></div>
          <div className="mt-[7px] flex items-center pl-[9px]">
            <Icon name="chain" className="mr-[13px] size-[11px]" />
            <div className="grid grid-cols-[52px_1fr] gap-y-[7px]">
              <SizeField id="W" value="2232 px" /><SizeField id="X" value="0 px" disabled />
              <SizeField id="H" value="2854 px" /><SizeField id="Y" value="0 px" disabled />
            </div>
          </div>
          <div className="mt-[9px] flex gap-px pl-[43px]"><Toggle name="portrait" on /><Toggle name="landscape" /></div>
          <div className="mt-[9px] pl-[43px] leading-[10px]">Resolution: 250 pixels/inch</div>
          <div className="mt-[7px] flex gap-[4px]"><span className="w-[39px] pt-px text-right">Mode</span><Dropdown label="Mode" value="RGB Color" className="w-[82px]" /></div>
          <Dropdown label="Depth" value="16 Bits/Channel" className="mt-[3px] ml-[43px] w-[82px]" />
          <div className="mt-[5px] flex items-center gap-[4px]">
            <span className="w-[39px] text-right">Fill</span>
            <button aria-label="Fill color" className="h-3 w-[11px] border border-[#404040]" />
            <Dropdown label="Fill" value="Transparent" className="w-[67px]" />
          </div>
          <div className="mt-[4px] border-t border-[#444] pt-[6px]"><SectionTitle>Rulers &amp; Grids</SectionTitle></div>
          <div className="mt-[8px] flex items-center gap-[6px] pl-[7px]">
            <Toggle name="ruler" on /><Toggle name="grid" /><Toggle name="pixelGrid" />
            <Dropdown label="Units" value="Pixels" className="ml-[9px] w-[46px]" />
          </div>
          <div className="mt-[8px] border-t border-[#444] pt-[5px]"><SectionTitle>Guides</SectionTitle></div>
          <div className="mt-[8px] flex items-center gap-[6px] pl-[7px]">
            <Toggle name="guides" on /><Toggle name="guidesLock" /><Toggle name="smartGuides" on />
            <div className="relative ml-[9px]">
              <Dropdown label="Guide style" value="" className="w-[46px]" />
              <div className="absolute top-[7px] left-1 h-px w-[27px] bg-[#ccc]" />
            </div>
          </div>
          <div className="mt-[8px] border-t border-[#444] pt-[5px]"><SectionTitle>Quick Actions</SectionTitle></div>
        </div>
        <div className="mt-[2px] mb-4 flex w-[10px] flex-col items-center bg-[#494949] text-[#888]">
          <Icon name="chevronUp" className="my-[2px] size-[6px]" />
          <div className="mt-px h-[222px] w-2 bg-[#686868]" />
          <Icon name="chevron" className="mt-auto mb-1 size-[5px]" />
        </div>
      </div>
    </section>
  );
}

const LAYERS = [
  { name: 'Layer 2' },
  { name: 'Layer 3', thumb: true },
  { name: 'cilla0000000...<<<<<<<<0 d' },
  { name: '1aa', hidden: true },
  { name: '169' },
  { name: 'm' },
  { name: '129 cm' },
  { name: '01.01.1990' },
];

function Layers() {
  return (
    <section className="flex min-h-0 flex-1 flex-col border-t-2 border-[#3a3a3a] text-[6px]">
      <div className="flex h-[19px] shrink-0 items-center justify-between bg-[#424242] pr-[3px]">
        <button className="h-full bg-[#535353] pr-[4px] pl-[5px] font-bold text-white">Layers</button>
        <button aria-label="Panel menu" className="text-[#aaa]"><Icon name="burger" className="size-[7px]" /></button>
      </div>
      <div className="flex h-[23px] shrink-0 items-center gap-[7px] border-b border-[#444] pt-1 pl-[4px] text-[#ddd]">
        <div className="relative">
          <Dropdown label="Filter" value="Kind" className="w-[52px] pl-2" />
          <Icon name="zoom" className="pointer-events-none absolute top-[4px] left-[3px] size-[7px]" />
        </div>
        {['image', 'adjust', 'type', 'shape', 'smart'].map((n) => <button key={n} aria-label={n}><Icon name={n} className="size-[8px]" /></button>)}
        <span className="mb-2 -ml-px size-[6px] rounded-full bg-[#ddd] shadow-[0_4px_0_-1px_#383838]" />
      </div>
      <div className="flex h-[19px] shrink-0 items-center border-b border-[#444] pl-1 text-[#858585]">
        <select aria-label="Blend mode" disabled className="h-[14px] w-[78px] appearance-none border border-[#4b4b4b] pl-[2px]"><option>Normal</option></select>
        <label className="ml-1 flex items-center gap-1">Opacity:<input disabled defaultValue="100%" className="h-[9px] w-[31px] bg-[#484848] pl-1" /></label>
      </div>
      <div className="flex h-5 shrink-0 items-center gap-[6px] pl-1 text-[#858585]">
        Lock:
        <div className="flex gap-[6px] text-[#aaa]">
          {['checker', 'brush', 'move', 'artboard', 'lock'].map((n) => <button key={n} aria-label={`Lock ${n}`}><Icon name={n} className="size-[8px]" /></button>)}
        </div>
        <label className="ml-[6px] flex items-center gap-1">Fill:<input disabled defaultValue="100%" className="h-[9px] w-[31px] bg-[#484848] pl-1" /></label>
      </div>
      <div className="flex min-h-0 flex-1">
        <ul className="min-w-0 flex-1 overflow-hidden text-[#eee]">
          <li className="flex h-[19px] items-center border-b border-[#484848]">
            <span className="grid h-full w-[19px] place-items-center border-r border-[#4b4b4b] text-[#aaa]"><Icon name="eye" className="size-[8px]" /></span>
            <Icon name="chevron" className="ml-3 size-[6px] text-[#aaa]" />
            <Icon name="folder" className="ml-[2px] size-[9px]" />
            <span className="ml-[7px]">edite text</span>
          </li>
          {LAYERS.map((l) => (
            <li key={l.name} className="flex h-[29px] items-center border-b border-[#484848] odd:h-7">
              <button aria-label={`Toggle ${l.name}`} className="grid h-full w-[19px] place-items-center border-r border-[#4b4b4b] text-[#aaa]">
                {l.hidden ? <span className="size-[9px] border-r border-b border-[#626262]" /> : <Icon name="eye" className="size-[8px]" />}
              </button>
              {l.thumb ? (
                <>
                  <span className="ml-[23px] h-5 w-[15px] border border-[#eee] bg-[repeating-conic-gradient(#d4d4d4_0_25%,#fff_0_50%)] bg-size-[6px_6px]">
                    <span className="block h-[5px] w-[3px] bg-[#8d5044]" />
                  </span>
                  <span className="ml-[7px]">{l.name}</span>
                </>
              ) : (
                <>
                  <Icon name="type" className="ml-[27px] size-[10px]" />
                  <span className="ml-[11px] whitespace-nowrap">{l.name}</span>
                </>
              )}
            </li>
          ))}
        </ul>
        <div className="flex w-[10px] flex-col items-center bg-[#494949] text-[#888]">
          <Icon name="chevronUp" className="mt-[4px] size-[6px]" />
          <div className="mt-[11px] h-[66px] w-2 bg-[#686868]" />
        </div>
      </div>
      <div className="flex h-[13px] shrink-0 items-center justify-end gap-[9px] border-t border-[#444] pr-[17px] text-[#ddd]">
        <Icon name="link" className="size-[8px] text-[#888]" />
        <span className="w-2 font-['Liberation_Serif',serif] text-[8px] leading-[8px] text-[#aaa] italic">fx</span>
        {['layerMask', 'adjust', 'folder', 'add'].map((n) => <button key={n} aria-label={n}><Icon name={n} className="size-[8px]" /></button>)}
        <Icon name="trash" className="size-[8px] text-[#888]" />
      </div>
    </section>
  );
}

export default function App() {
  return (
    <div className="relative flex h-screen flex-col overflow-hidden bg-[#535353] font-['Open_Sans',sans-serif] leading-normal text-[#ddd]">
      <MenuBar />
      <OptionsBar />
      <div className="flex min-h-0 flex-1">
        <Toolbar />
        <Workspace />
        <IconDock />
        <aside className="flex w-[180px] shrink-0 flex-col border-x border-[#3a3a3a]">
          <div className="flex h-[9px] shrink-0 items-center justify-end bg-[#424242] pr-1 text-[#ccc]"><Icon name="expand" className="size-[5px]" /></div>
          <Properties />
          <Layers />
        </aside>
        <div className="w-1 shrink-0 bg-[#4b4b4b]" />
      </div>
      <div className="pointer-events-none absolute right-[11px] bottom-3 font-[Roboto,sans-serif] text-[38px] leading-[48px] font-light text-[#1e1e1e]">
        EKOGEA.<span className="text-[#86a30e]">ORG</span>
      </div>
    </div>
  );
}
